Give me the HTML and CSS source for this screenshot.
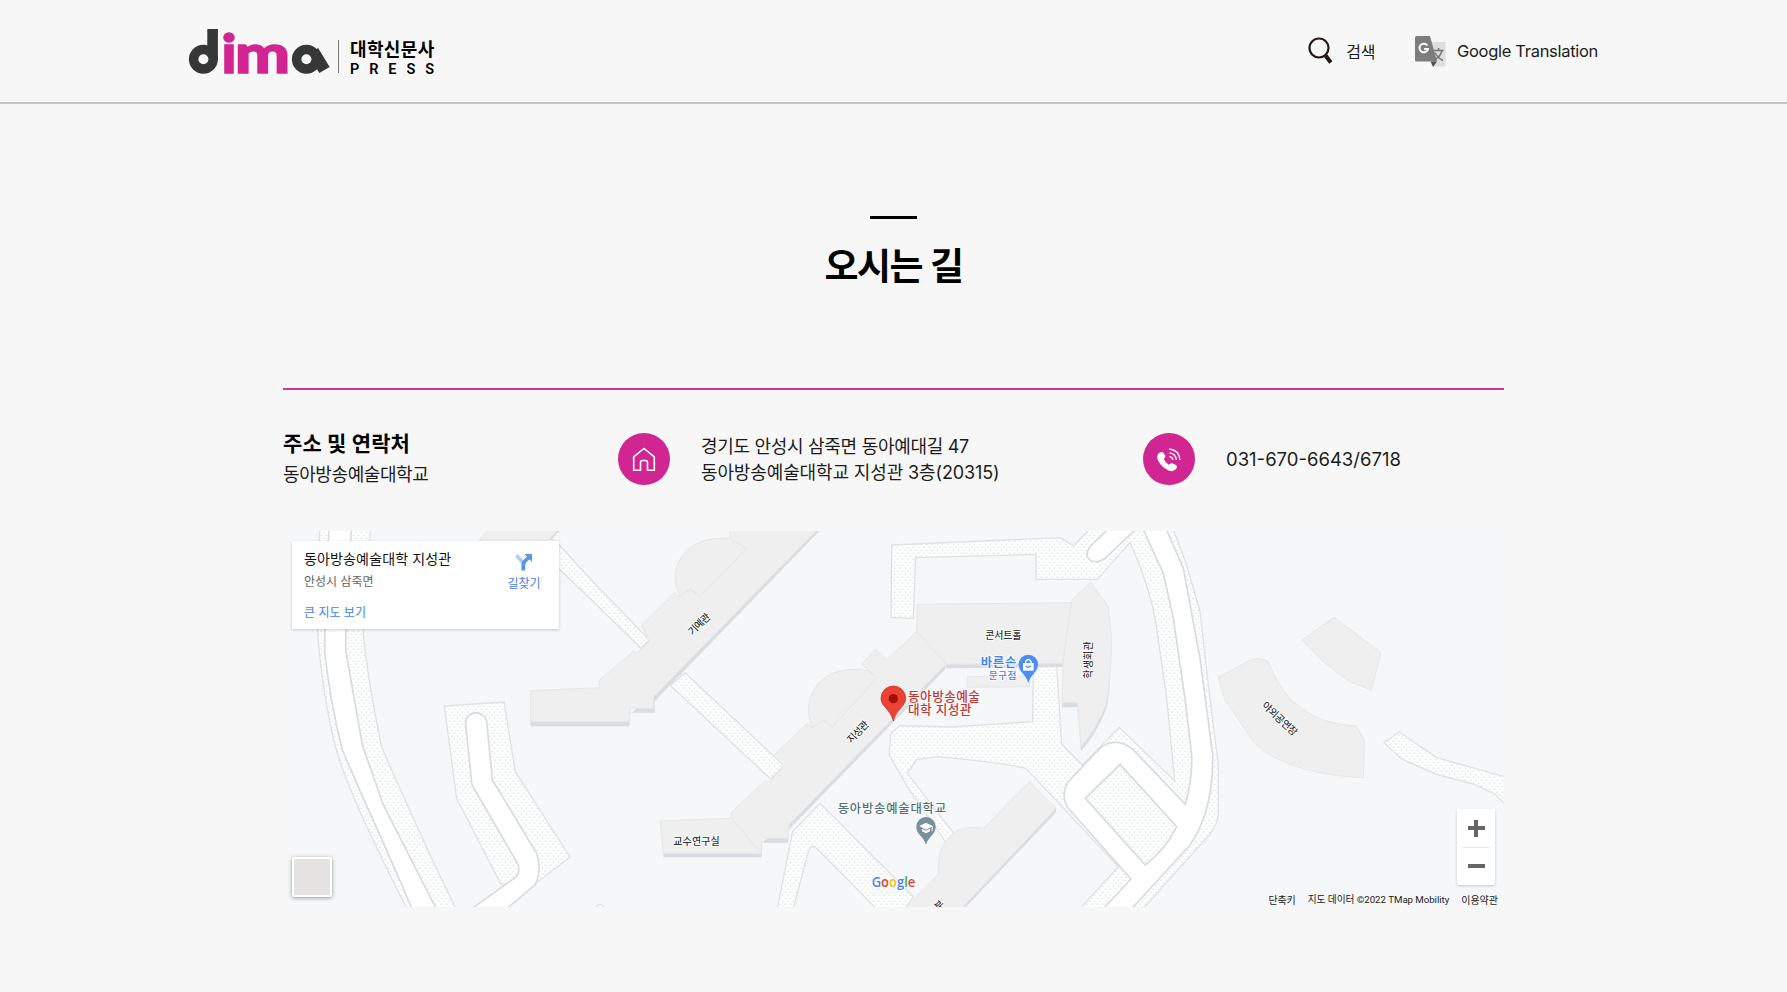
FILE: index.html
```html
<!DOCTYPE html>
<html lang="ko">
<head>
<meta charset="utf-8">
<title>dima 대학신문사 - 오시는 길</title>
<link rel="stylesheet" href="styles.css">
</head>
<body>
<header class="header">
  <div class="header-inner">
    <a class="logo" aria-label="dima 대학신문사 PRESS">
      <svg class="logo-mark" width="144" height="50" viewBox="0 0 144 50">
        <g class="logo-word">
          <text class="dark small-letter" x="5" y="40">d</text>
          <text class="pink" x="32.500" y="44.500" textLength="15" lengthAdjust="spacingAndGlyphs">i</text>
          <text class="pink" x="46" y="44.500" textLength="55" lengthAdjust="spacingAndGlyphs">m</text>
          <text class="dark small-letter" x="110" y="38">a</text>
        </g>
        <!-- round bowls with their stems -->
        <rect x="18.300" y="1" width="10.600" height="31" fill="#373737"/>
        <circle cx="14.400" cy="31.300" r="14.500" fill="#373737"/>
        <circle cx="14.400" cy="31.300" r="5" fill="#f7f7f7"/>
        <line x1="124" y1="23" x2="135.500" y2="42" stroke="#373737" stroke-width="12"/>
        <circle cx="117.400" cy="31.300" r="14.500" fill="#373737"/>
        <circle cx="117.400" cy="31.300" r="5" fill="#f7f7f7"/>
      </svg>
      <span class="logo-side"><b>대학신문사</b><span>PRESS</span></span>
    </a>
    <nav class="tools">
      <a class="tool">
        <svg width="26" height="28" viewBox="0 0 26 28"><circle cx="11" cy="11" r="9.500" fill="none" stroke="#231815" stroke-width="2.200"/><path d="M17.500 18.500l5.300 7" stroke="#231815" stroke-width="4"/></svg>
        <span class="search-text">검색</span>
      </a>
      <a class="tool translate">
        <svg width="31" height="31" viewBox="0 0 31 31"><path d="M12 6h18.500v24.500H19z" fill="#dedede"/><path d="M15.500 25.500H22L18 31z" fill="#4e4e4e"/><path d="M1.500 0H15l7 25.500H1.500Q0 25.500 0 24V1.500Q0 0 1.500 0z" fill="#7d7d7d"/><path d="M12.300 9.500A4.300 4.300 0 1 0 13 13H9" fill="none" stroke="#fff" stroke-width="2"/><path d="M18.500 14.500h10M23.500 12v2.500M27 14.500q-1.500 6-7 9M20 16.500q2.500 5.500 8 8" fill="none" stroke="#757575" stroke-width="1.500"/></svg>
        <span>Google Translation</span>
      </a>
    </nav>
  </div>
</header>
<main class="page">
  <h1 class="title">오시는 길</h1>
  <section class="contact">
    <div class="who"><h2>주소 및 연락처</h2><p>동아방송예술대학교</p></div>
    <div class="info address">
      <svg width="52" height="52" viewBox="0 0 52 52"><circle cx="26" cy="26" r="26" fill="#d12592"/><path d="M15.700 37.200V23.800L26 15.500 36.300 23.800v13.400h-6.800V29.500q0-2-2-2h-3q-2 0-2 2v7.700z" fill="none" stroke="#fff" stroke-width="1.600"/></svg>
      <p>경기도 안성시 삼죽면 동아예대길 47<br><span class="line-two">동아방송예술대학교 지성관 3층(20315)</span></p>
    </div>
    <div class="info phone">
      <svg width="52" height="52" viewBox="0 0 52 52"><circle cx="26" cy="26" r="26" fill="#d12592"/><path d="M16.500 19.700q2.500-1.800 4.500.7l1.300 2.300q.7 1.700-1.500 3.100 1.200 3.800 5 6 2-2.200 4-1.300l3.200 1.600q2.200 1.700 0 4-3.800 4-9.700.2-6.300-4-8.600-9.600-1.500-4.800 1.800-7z" fill="#fff"/><path d="M26.500 23.500q3 .4 3.500 3.500M26.300 19.800q6.400.6 7.200 7.200M26 16q10 .8 11 11" fill="none" stroke="#fff" stroke-width="1.300"/></svg>
      <p>031-670-6643/6718</p>
    </div>
  </section>
  <section class="map">
    <svg class="map-canvas" width="1221" height="376" viewBox="9 18 3663 1128">
      <defs>
        <pattern id="dots" width="16" height="18" patternUnits="userSpaceOnUse"><rect width="16" height="18" fill="#fcfdfd"/><rect x="2" y="2" width="4" height="4" fill="#e0e3e4"/><rect x="10" y="11" width="4" height="4" fill="#e0e3e4"/></pattern>
      </defs>
      <!-- footpaths -->
      <g class="walk">
        <path d="M120 10C112 120 110 250 114 340C122 430 140 560 165 660C200 790 290 970 380 1150H527L455 1000C400 880 340 750 305 665C285 570 262 450 250 330V250L272 10Z"/>
        <path d="M493 543L672 531L706 740L870 996L774 1070L663 1078L530 820Z"/>
        <path d="M800 30L838 60L950 182L1108 345L1083 370L950 240L820 115Z"/>
        <g transform="translate(1080 0)">
          <path d="M135 443L432 722L392 762L92 482Z"/>
          <path d="M540 835L820 1115L795 1150H708L530 970Q515 955 505 980L460 1150H412L458 920Z"/>
        </g>
        <path transform="translate(2160 0)" d="M-325 60L182 38L220 63L268 14H520L560 120L600 260L625 480L655 720V870Q650 910 610 950L430 1150H241L355 1025L78 730Q0 712 -190 695L-250 704L-278 745L-135 930L-160 955L-275 790L-332 690L-328 625L-300 602L-150 606L98 590L100 425L170 422L185 658L247 720L358 607L524 768L500 520L470 310Q455 200 390 52L292 163H108V88L-253 98L-260 280L-327 277Z"/>
        <path transform="translate(2760 195)" d="M598 426L552 458L605 507L710 553L820 582L885 612L920 647V562L710 503Z"/>
      </g>
      <!-- roads -->
      <g class="road">
        <path d="M147 14L136 200L134 380C145 480 160 570 187 675L250 820C300 930 350 1040 395 1150H468L310 840L247 660L197 375L199 250L214 14Z"/>
        <path d="M577 1150L705 1058Q722 1045 714 1018L576 780L557 598C554 552 620 552 621 598L637 765L770 985Q786 1040 765 1080L681 1150"/>
        <g transform="translate(2160 0)">
          <path d="M430 14L490 145L520 280L555 520L575 690Q578 760 556 838L400 675Q355 635 305 665L205 770Q180 810 205 850L393 1062L311 1150H396L570 960Q640 860 638 690L600 400L550 130L499 14Z"/>
          <path d="M323 14L270 65Q250 95 275 108Q295 115 315 100L406 14"/>
          <path class="island" d="M360 718L530 905Q500 970 436 1020L256 820Z"/>
        </g>
      </g>
      <!-- buildings: shaded side first, roof above -->
      <g class="side">
        <path d="M780 45H814L842 14H820Z"/>
        <path transform="translate(1080 0)" d="M530 14H542L44 529V563H-30L-32 604H-328V590L-40 580L30 510Z"/>
        <path transform="translate(1080 0)" d="M900 400L916 412V432L446 914L444 953H366V997H70V980L350 970L430 890Z"/>
        <path transform="translate(1080 0)" d="M1268 410V426L918 430V415Z"/>
        <path transform="translate(1080 0)" d="M1240 845L1248 850V862L974 1150H955Z"/>
        <path transform="translate(2160 0)" d="M330 460Q326 530 318 554Q290 624 243 679L234 547H186V530L300 520Z"/>
      </g>
      <g class="roof">
        <path d="M629 10L598 45H805L838 10Z"/>
        <g transform="translate(1080 0)">
          <path d="M270 14H532L40 516V550H-30L-32 590H-328V497L-122 488V466L-18 378L-10 385L28 350L5 300L102 205L118 215L152 193L180 213L318 72L270 40Z"/>
          <path d="M118 212C80 130 130 30 270 40L318 72L180 213L152 193Z"/>
          <path d="M832 238L1294 233L1268 415L918 418L830 320Z"/>
          <path d="M830 320L916 412V420L446 900L444 940H366L364 985H70L60 888L274 880V862L375 768L388 772L430 725L402 690L502 595L516 607L550 585L578 605L712 458L665 418L706 372L740 405Z"/>
          <path d="M516 607C480 520 540 410 685 437L712 458L578 605L550 585ZM274 880L364 985"/>
          <path d="M982 455L1168 453V485L982 487Z"/>
          <path d="M1168 770L1248 850L965 1150H796L897 1045C885 960 940 890 1030 910Z"/>
        </g>
        <path transform="translate(2160 0)" d="M272 172L325 245L335 345Q332 470 318 540Q290 610 243 665L232 533H186L190 400L216 225Z"/>
        <g transform="translate(2760 195)">
          <path d="M402 82L543 188L514 300L450 275L375 220L306 150Z"/>
          <path d="M55 262L150 210Q180 200 205 214C240 310 310 400 468 408L494 452L490 563C350 558 220 520 160 455L75 330Z"/>
        </g>
      </g>
      <path d="M948 1144l12-7 14 9" fill="none" stroke="#d9dbe0" stroke-width="3"/>
      <!-- place names -->
      <g class="labels">
        <text transform="translate(1237 332) rotate(-44)" textLength="78">기예관</text>
        <text transform="translate(1714 656) rotate(-46)" textLength="78">지성관</text>
        <text x="1180" y="959" textLength="139">교수연구실</text>
        <text x="2116" y="342" textLength="108">콘서트홀</text>
        <text transform="translate(2436 461) rotate(-90)" textLength="112">학생회관</text>
        <text transform="translate(2944 544) rotate(43)" textLength="132">야외공연장</text>
        <text transform="translate(1975 1158) rotate(-42)">부</text>
        <text class="shop" x="2102" y="427" textLength="107">바른손</text>
        <text class="shop small" x="2126" y="463" textLength="83">문구점</text>
        <text class="here" x="1884" y="528" textLength="216">동아방송예술</text>
        <text class="here" x="1884" y="568" textLength="190">대학 지성관</text>
        <text class="school" x="1673" y="865" textLength="325">동아방송예술대학교</text>
      </g>
      <!-- pins -->
      <path d="M1840 588C1830 550 1803 545 1803 520A37 37 0 0 1 1877 520C1877 545 1850 550 1840 588Z" fill="#ea4335" stroke="#c5221f" stroke-width="2"/>
      <circle cx="1840" cy="521" r="14" fill="#a50e0e"/>
      <path d="M2245 474C2238 448 2216 442 2216 418A29 29 0 0 1 2274 418C2274 442 2252 448 2245 474Z" fill="#4b8df8"/>
      <path d="M2229 414h32v23h-32z" fill="#fff"/><path d="M2237 414v-5q8-11 16 0v5" fill="none" stroke="#fff" stroke-width="4"/><path d="M2237 422q8 10 16 0" fill="none" stroke="#4b8df8" stroke-width="4"/>
      <path d="M1938 959C1931 933 1909 929 1909 905A29 29 0 0 1 1967 905C1967 929 1945 933 1938 959Z" fill="#78909c"/>
      <path d="M1918 903l20-10 20 10v16h-3v-13l-17 8zM1926 911v8l12 6 12-6v-8l-12 6z" fill="#fff"/>
      <text class="google" x="1775" y="1086" textLength="131" lengthAdjust="spacingAndGlyphs"><tspan fill="#4285f4">G</tspan><tspan fill="#ea4335">o</tspan><tspan fill="#fbbc05">o</tspan><tspan fill="#4285f4">g</tspan><tspan fill="#34a853">l</tspan><tspan fill="#ea4335">e</tspan></text>
    </svg>
    <div class="place-card">
      <div class="place-text"><strong>동아방송예술대학 지성관</strong><span>안성시 삼죽면</span><a>큰 지도 보기</a></div>
      <a class="directions"><svg width="18" height="18" viewBox="0 0 18 18"><path d="M1.500 2.500L8 9.500V11" fill="none" stroke="#a9cdf5" stroke-width="3.600"/><path d="M8.300 17.500V12Q8.300 8.500 14 4.500" fill="none" stroke="#5796e3" stroke-width="3.800"/><path d="M9.500 1H17v8z" fill="#5796e3"/></svg>길찾기</a>
    </div>
    <div class="layer-button"></div>
    <div class="zoom"><i class="plus"></i><hr><i></i></div>
    <div class="terms"><span>단축키</span><span class="copyright">지도 데이터 ©2022 TMap Mobility</span><span>이용약관</span></div>
  </section>
</main>
</body>
</html>
```
FILE: styles.css
```css
* { box-sizing: border-box; }
body { margin: 0; background: #f7f7f7; color: #1c1c1c; font-family: Inter, "Noto Sans CJK KR", sans-serif; }
h1, h2, p { margin: 0; }
.header { height: 104px; border-bottom: 2px solid #c3c3c3; }
.header-inner { display: flex; justify-content: space-between; margin-left: 189px; margin-right: 189px; height: 102px; }
.logo { display: flex; height: 50px; margin-top: 28px; }
.logo-mark { overflow: visible; }
.logo-word { font: 900 54px Lato, sans-serif; stroke-width: 1.500px; }
.logo-word .small-letter { font-size: 26px; stroke: none; }
.dark { fill: #373737; }
.pink { fill: #d12592; stroke: #d12592; }
.logo-side { display: flex; flex-direction: column; height: 33px; margin: 12px 0 0 5px; padding-left: 11px; border-left: 1px solid #777; color: #000; }
.logo-side b { font-size: 18px; line-height: 20px; letter-spacing: .35px; white-space: nowrap; }
.logo-side span { font: 600 14.500px/17px Roboto, sans-serif; letter-spacing: 9.900px; margin-top: 1px; }
.tools { display: flex; align-items: center; height: 102px; }
.tool { display: flex; align-items: center; font-size: 16px; }
.search-text { margin-left: 12px; letter-spacing: -.4px; }
.translate { margin-left: 40px; }
.translate span { margin-left: 11px; white-space: nowrap; font-size: 16.500px; letter-spacing: -.3px; }
.page { width: 1221px; margin: 0 auto; }
.title { margin-top: 112px; text-align: center; color: #000; font-size: 37px; line-height: 54px; font-weight: 600; letter-spacing: -1.500px; }
.title::before { content: ""; display: block; width: 47px; height: 3px; margin: 0 auto 21px; background: #000; }
.contact { display: grid; grid-template-columns: 335px 525px 1fr; height: 143px; margin-top: 94px; padding-top: 38px; border-top: 2px solid #c43b91; }
.who h2 { color: #000; font-size: 21px; line-height: 32px; letter-spacing: .15px; }
.who p { font-size: 18px; line-height: 30px; letter-spacing: -.4px; }
.info { display: flex; align-items: center; height: 62px; white-space: nowrap; font-size: 18px; line-height: 26px; }
.info svg { flex: none; margin-right: 31px; }
.address p { padding-top: 2px; }
.address { letter-spacing: -.3px; }
.line-two { letter-spacing: -.13px; }
.phone { font-size: 18.500px; }
.map { position: relative; width: 1221px; height: 376px; background: #f5f7f9; overflow: hidden; font-family: "Noto Sans CJK KR", sans-serif; }
.map-canvas { display: block; }
.walk path, .island { fill: url(#dots); stroke: #dfe1e4; stroke-width: 4; }
.road path { fill: #fff; stroke: #dadbe0; stroke-width: 5; }
.road .island { fill: url(#dots); }
.side { fill: #d9dce0; }
.roof { fill: #efefef; stroke: #e6e6e6; stroke-width: 3; }
.labels { font-size: 30px; font-weight: 500; fill: #333; stroke: #fff; stroke-width: 5; paint-order: stroke; }
.labels .shop { fill: #3f83ee; font-size: 37px; font-weight: 700; }
.labels .small { font-size: 29px; font-weight: 500; }
.labels .here { fill: #c53332; font-size: 38px; font-weight: 500; }
.labels .school { fill: #546e7a; font-size: 37px; }
.google { font: 600 43px "Open Sans", sans-serif; stroke: #fff; stroke-width: 5; paint-order: stroke; }
.place-card { position: absolute; left: 9px; top: 10px; width: 267px; height: 88px; background: #fff; padding: 7px 12px; display: flex; justify-content: space-between; box-shadow: 0 1px 3px #0003; }
.place-text { display: flex; flex-direction: column; font-size: 12px; color: #666; }
.place-text strong { font-size: 14px; line-height: 20px; font-weight: 400; color: #111; letter-spacing: .15px; }
.place-text span { line-height: 17px; margin-top: 4px; }
.place-text a { color: #427fed; line-height: 17px; margin-top: 14px; font-size: 12px; }
.directions { display: flex; flex-direction: column; align-items: center; width: 46px; padding-top: 5px; color: #427fed; font-size: 12px; line-height: 17px; }
.directions svg { margin-bottom: 3px; }
.layer-button { position: absolute; left: 9px; bottom: 10px; width: 40px; height: 40px; background: #e5e3df; border: 2px solid #fff; border-radius: 2px; box-shadow: 0 1px 4px #0006; }
.zoom { position: absolute; right: 9px; top: 278px; width: 38px; height: 76px; background: #fff; border-radius: 2px; box-shadow: 0 1px 3px #0003; display: flex; flex-direction: column; align-items: center; justify-content: space-between; padding: 17px 5px; }
.zoom i { width: 17px; height: 4px; background: #666; }
.zoom .plus { position: relative; }
.zoom .plus::after { content: ""; position: absolute; left: 6.500px; top: -6.500px; width: 4px; height: 17px; background: #666; }
.zoom hr { width: 28px; height: 1px; margin: 0; border: 0; background: #e6e6e6; }
.terms { position: absolute; right: 6px; bottom: 0; display: flex; gap: 12px; font-size: 10px; line-height: 15px; color: #222; white-space: nowrap; }
.terms span:first-child { letter-spacing: -.1px; }
.terms .copyright { font-family: Roboto, "Noto Sans CJK KR", sans-serif; font-size: 9.700px; letter-spacing: -.05px; }
```
